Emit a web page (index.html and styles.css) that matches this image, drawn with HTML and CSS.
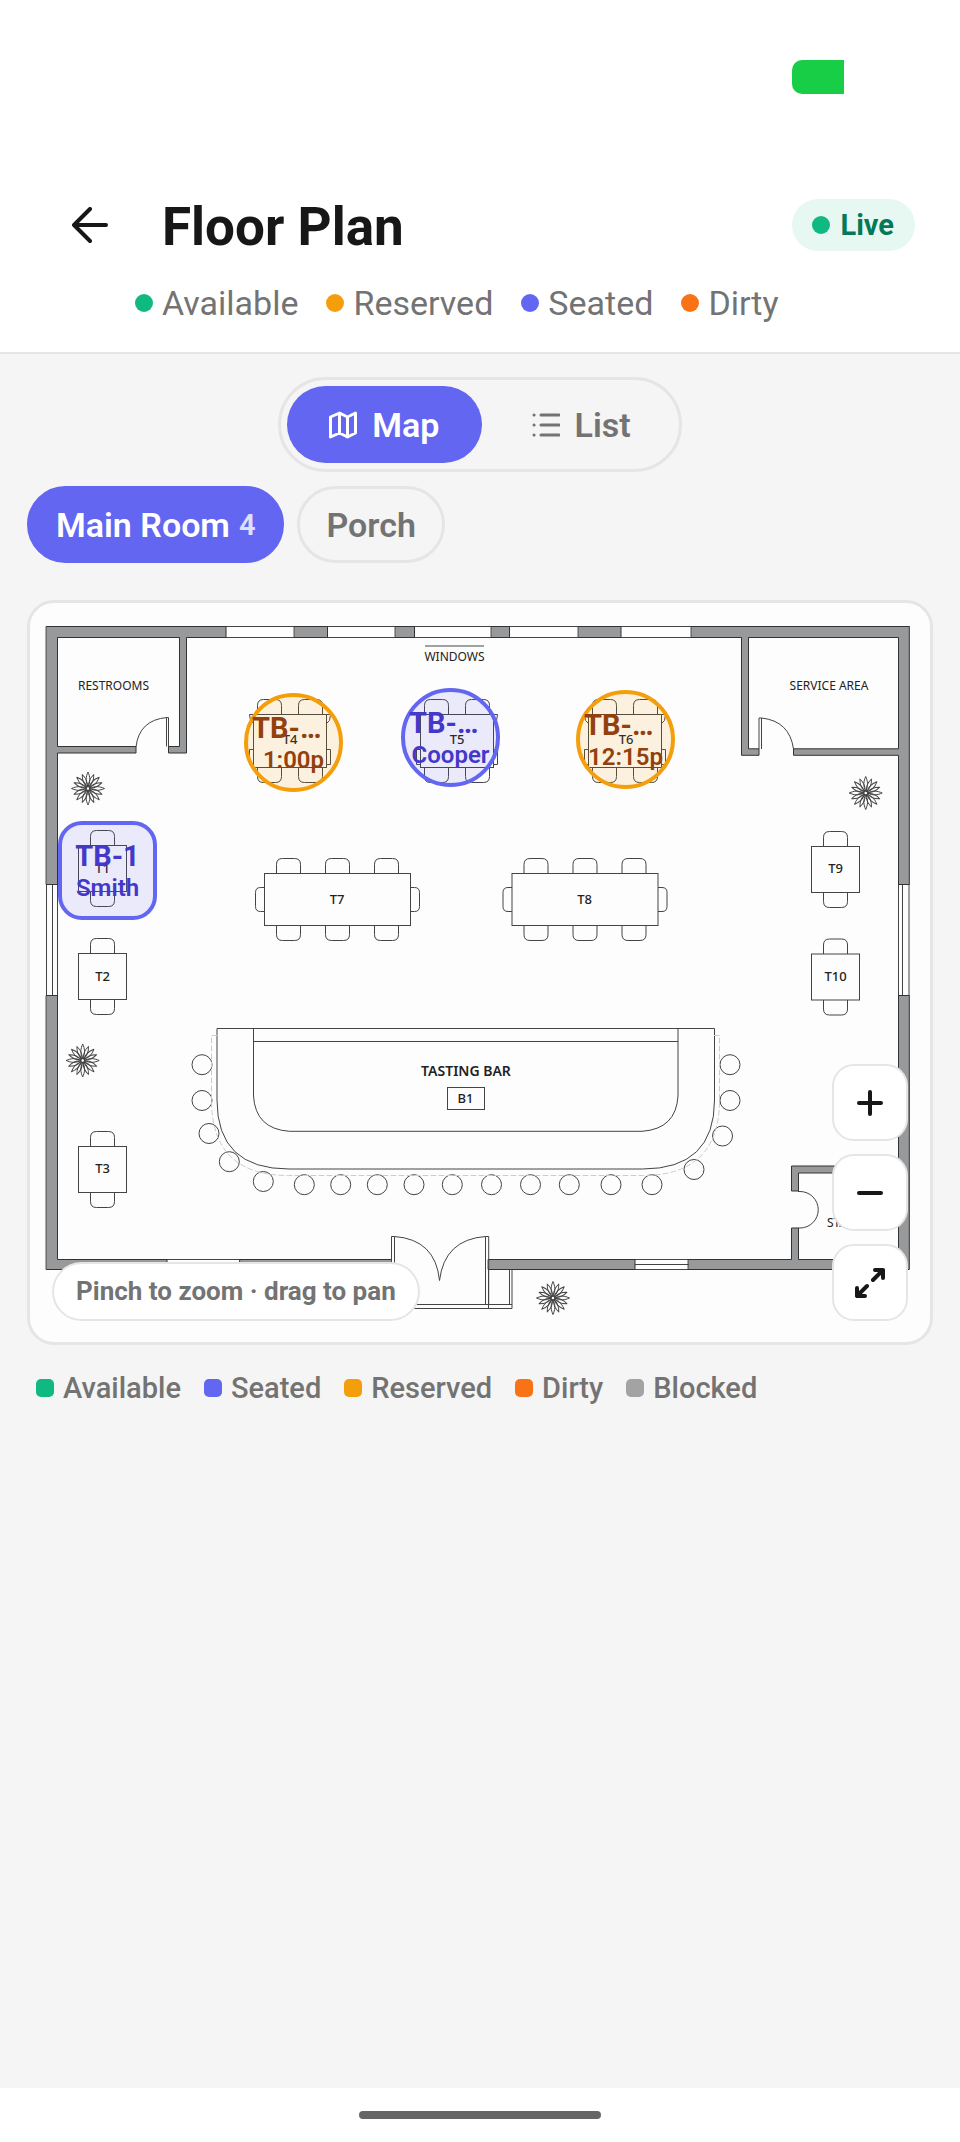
FILE: index.html
```html
<!DOCTYPE html>
<html lang="en">
<head>
  <meta charset="UTF-8">
  <meta name="viewport" content="width=device-width, initial-scale=1.0">
  <title>Floor Plan</title>
  <link rel="stylesheet" href="styles.css">
</head>
<body>
  <div class="status-bar"><span class="status-chip"></span></div>

  <header class="header">
    <div class="header-row">
      <button class="back" type="button" aria-label="Back">
        <svg width="36" height="36" viewBox="0 0 36 36"><path d="M34 18H3M18 2 2 18l16 16"/></svg>
      </button>
      <h1>Floor Plan</h1>
      <span class="live"><i class="dot available"></i>Live</span>
    </div>
    <ul class="summary">
      <li><i class="dot available"></i>Available</li>
      <li><i class="dot reserved"></i>Reserved</li>
      <li><i class="dot seated"></i>Seated</li>
      <li><i class="dot dirty"></i>Dirty</li>
    </ul>
  </header>

  <main class="content">
    <div class="view-toggle">
      <button class="view active" type="button">
        <svg width="28" height="28" viewBox="0 0 28 28"><path d="M1.5 6v20l9-4 8 4 8-4V2l-8 4-8-4zM10.5 2v20M18.5 6v20"/></svg>
        Map
      </button>
      <button class="view" type="button">
        <svg width="28" height="28" viewBox="0 0 28 28"><path d="M9 4h18M9 14h18M9 24h18M2 4h.1M2 14h.1M2 24h.1"/></svg>
        List
      </button>
    </div>

    <nav class="rooms">
      <button class="room active" type="button">Main Room <span class="count">4</span></button>
      <button class="room" type="button">Porch</button>
    </nav>

    <section class="map" id="map">
      <svg class="plan" viewBox="30 603 900 739">
        <defs>
          <g id="petals">
            <path d="M0-2C-3-7-2-12 0-16.5C2-12 3-7 0-2zM0 2C-3 7-2 12 0 16.5C2 12 3 7 0 2z"/>
            <path d="M-2 0C-7-3-12-2-16.5 0C-12 2-7 3-2 0zM2 0C7-3 12-2 16.5 0C12 2 7 3 2 0z"/>
          </g>
          <g id="plant">
            <use href="#petals"/>
            <use href="#petals" transform="rotate(22.5) scale(.92)"/>
            <use href="#petals" transform="rotate(45) scale(.96)"/>
            <use href="#petals" transform="rotate(67.5) scale(.92)"/>
            <circle r="2"/>
          </g>
          <path id="chair-top" d="M0 15V6q0-6 6-6h12q6 0 6 6v9"/>
          <path id="chair-bottom" d="M0 0v9q0 6 6 6h12q6 0 6-6V0"/>
          <path id="chair-left" d="M9 0H5Q0 0 0 5v14q0 5 5 5h4"/>
          <path id="chair-right" d="M0 0h4q5 0 5 5v14q0 5-5 5H0"/>
          <g id="table-small">
            <rect width="48" height="46"/>
            <use href="#chair-top" x="12" y="-15"/>
            <use href="#chair-bottom" x="12" y="46"/>
          </g>
          <g id="table-six">
            <rect width="73" height="53"/>
            <use href="#chair-top" x="4" y="-15"/>
            <use href="#chair-top" x="45" y="-15"/>
            <use href="#chair-bottom" x="4" y="53"/>
            <use href="#chair-bottom" x="45" y="53"/>
            <path d="M0 35h-4v15h4M73 35h4v15h-4M73 0h4l-1 6-3 3M0 0h-4l1 6 3 3"/>
          </g>
          <g id="table-long">
            <rect width="146" height="52"/>
            <use href="#chair-top" x="12" y="-15"/>
            <use href="#chair-top" x="61" y="-15"/>
            <use href="#chair-top" x="110" y="-15"/>
            <use href="#chair-bottom" x="12" y="52"/>
            <use href="#chair-bottom" x="61" y="52"/>
            <use href="#chair-bottom" x="110" y="52"/>
            <use href="#chair-left" x="-9" y="14"/>
            <use href="#chair-right" x="146" y="14"/>
          </g>
        </defs>

        <!-- windows -->
        <g class="line">
          <path d="M46.5 626.5h863M57.5 637.5h841M46.5 884v112M52.5 884v112M57.5 884v112M898.5 884v112M902.5 884v112M909 884v112"/>
          <path d="M167 1259.5h73M167 1269.5h73M635 1259.5h54M635 1264.5h54M635 1269.5h54"/>
        </g>

        <!-- walls -->
        <g class="wall">
          <path d="M46.5 626.5H226v11h-39.5v115.5h-18v-6.5h11v-109H57.5v109H136v6.5H57.5v131.500h-11z"/>
          <path d="M294.5 626.5h33v11h-33zM395.5 626.5h19v11h-19zM491.5 626.5h18v11h-18zM578.5 626.5h42.5v11h-42.5z"/>
          <path d="M691.5 626.5h217.800v258h-10.800V755.3H793.5v-6.5h105v-111.300H748.5v111.300H759v6.5h-17.500v-117.800h-50z"/>
          <path d="M46.5 995.5h11v264H167v10H46.5zM240 1259.5h151.500v10H240z"/>
          <path d="M488.5 1259.5H635v10H488.5zM688.5 1259.5h103V1228h7v31.500h100V1173h-100v18h-7v-25h107V995.5h10.800v274H688.5z"/>
        </g>

        <!-- doors -->
        <g class="line">
          <path d="M136 747q3-27 31-29.500h1.500V747M166.5 718v28.500"/>
          <path d="M793.5 749q-4-28-32-31h-2.500v31M761.5 718v31"/>
          <path d="M798 1191.5h2a18 18 0 0 1 0 36.500h-2"/>
          <path d="M391.5 1308V1236.5h3v68M394.5 1236.5q41 3 45 44q5-41 46-44h3.200v67.500M485.5 1236.5v68M391.5 1304.5H512M391.5 1308.5H512v-39M509.5 1269.5v35M488.5 1269.5v39"/>
        </g>

        <!-- bar -->
        <g class="line">
          <path d="M217 1028.5h497.500V1100q0 69-72 69H289q-72 0-72-69z"/>
          <path d="M253.5 1028.5V1096q2 33 36 35.300H642q34-2.300 36-35.300v-67.500M253.5 1041.5H678"/>
          <circle cx="202" cy="1064.7" r="10"/><circle cx="202" cy="1100.5" r="10"/>
          <circle cx="209" cy="1133.5" r="10"/><circle cx="229.3" cy="1161.7" r="10"/>
          <circle cx="263.3" cy="1181.5" r="10"/><circle cx="304.3" cy="1184.7" r="10"/>
          <circle cx="340.7" cy="1184.7" r="10"/><circle cx="377.3" cy="1184.7" r="10"/>
          <circle cx="414" cy="1184.7" r="10"/><circle cx="452.3" cy="1184.7" r="10"/>
          <circle cx="491.5" cy="1184.7" r="10"/><circle cx="530.5" cy="1184.7" r="10"/>
          <circle cx="569.3" cy="1184.7" r="10"/><circle cx="611" cy="1184.7" r="10"/>
          <circle cx="652" cy="1184.7" r="10"/><circle cx="694" cy="1169.5" r="10"/>
          <circle cx="722.5" cy="1136" r="10"/><circle cx="730" cy="1100.5" r="10"/>
          <circle cx="730" cy="1064.7" r="10"/>
          <rect x="447.5" y="1087.5" width="37" height="22"/>
        </g>
        <path class="footrail" d="M217 1035.5h-5.500V1100q0 75.500 77 75.500h354q77 0 77-75.500v-64.500H714"/>

        <!-- tables -->
        <g class="line">
          <use href="#table-small" x="78.5" y="845.5"/>
          <use href="#table-small" x="78.5" y="953.5"/>
          <use href="#table-small" x="78.5" y="1146.5"/>
          <use href="#table-small" x="811.5" y="846.5"/>
          <use href="#table-small" x="811.5" y="954"/>
          <use href="#table-six" x="253.5" y="714.5"/>
          <use href="#table-six" x="420.5" y="714.5"/>
          <use href="#table-six" x="588.5" y="714.5"/>
          <use href="#table-long" x="264.5" y="873.5"/>
          <use href="#table-long" x="512" y="873.5"/>
          <path d="M425 646h59"/>
        </g>

        <g class="plants">
          <use href="#plant" x="88" y="788.5"/>
          <use href="#plant" x="865.7" y="793"/>
          <use href="#plant" x="82.7" y="1060.5"/>
          <use href="#plant" x="553" y="1298"/>
        </g>

        <g class="labels">
          <text x="113.5" y="690">RESTROOMS</text>
          <text x="829" y="690">SERVICE AREA</text>
          <text x="454.5" y="661">WINDOWS</text>
          <text x="846" y="1227">STAIRS</text>
        </g>
        <g class="labels strong">
          <text x="102.5" y="873">T1</text>
          <text x="102.5" y="981">T2</text>
          <text x="102.5" y="1173">T3</text>
          <text x="290" y="744">T4</text>
          <text x="457" y="744">T5</text>
          <text x="626" y="744">T6</text>
          <text x="337" y="904">T7</text>
          <text x="584.5" y="904">T8</text>
          <text x="835.5" y="873">T9</text>
          <text x="835.5" y="981">T10</text>
          <text x="465.5" y="1103">B1</text>
          <text class="bar-name" x="466" y="1076">TASTING BAR</text>
        </g>
      </svg>

      <button class="marker square seated-table" type="button" style="left: 28px; top: 218px"><b>TB-1</b><span>Smith</span></button>
      <button class="marker reserved-table" type="button" style="left: 214px; top: 90px"><b class="cut">TB-…</b><span>1:00p</span></button>
      <button class="marker seated-table" type="button" style="left: 371px; top: 85px"><b class="cut">TB-…</b><span>Cooper</span></button>
      <button class="marker reserved-table" type="button" style="left: 546px; top: 87px"><b class="cut">TB-…</b><span>12:15p</span></button>

      <p class="hint">Pinch to zoom · drag to pan</p>

      <div class="zoom">
        <button type="button" aria-label="Zoom in">
          <svg width="32" height="32" viewBox="0 0 32 32"><path d="M5 16h22M16 5v22"/></svg>
        </button>
        <button type="button" aria-label="Zoom out">
          <svg width="32" height="32" viewBox="0 0 32 32"><path d="M5 16h22"/></svg>
        </button>
        <button type="button" aria-label="Fit to screen">
          <svg width="32" height="32" viewBox="0 0 32 32"><path d="M21 3h8v8M29 3 19 13M11 29H3v-8M3 29l10-10"/></svg>
        </button>
      </div>
    </section>

    <ul class="legend">
      <li><i class="swatch available"></i>Available</li>
      <li><i class="swatch seated"></i>Seated</li>
      <li><i class="swatch reserved"></i>Reserved</li>
      <li><i class="swatch dirty"></i>Dirty</li>
      <li><i class="swatch blocked"></i>Blocked</li>
    </ul>
  </main>

  <footer class="home-bar"><span></span></footer>
</body>
</html>
```

FILE: styles.css
```css
* {
  box-sizing: border-box;
}

body {
  margin: 0;
  min-height: 100vh;
  display: flex;
  flex-direction: column;
  background: #f5f5f5;
  color: #171717;
  font-family: Roboto, "Liberation Sans", sans-serif;
}

h1,
p,
ul {
  margin: 0;
  padding: 0;
}

ul {
  list-style: none;
}

button {
  font: inherit;
  padding: 0;
  border: 0;
  background: none;
  cursor: pointer;
}

svg {
  display: block;
  fill: none;
  stroke: currentColor;
  stroke-linecap: round;
  stroke-linejoin: round;
}

/* status bar */
.status-bar {
  display: flex;
  justify-content: flex-end;
  padding: 60px 116px 0 0;
  height: 184px;
  background: #fff;
}

.status-chip {
  width: 52px;
  height: 34px;
  border-radius: 10px 0 0 10px;
  background: #19ce47;
}

/* header */
.header {
  padding-bottom: 28px;
  background: #fff;
  border-bottom: 2px solid #e5e5e5;
}

.header-row {
  display: flex;
  align-items: center;
  height: 82px;
  padding: 0 45px 0 72px;
}

.back {
  margin-right: 54px;
  color: #171717;
}

.back svg {
  stroke-width: 4;
}

h1 {
  flex: 1;
  padding-top: 4px;
  font-size: 53px;
  line-height: 64px;
  font-weight: 700;
}

.live {
  display: flex;
  align-items: center;
  gap: 10px;
  height: 52px;
  padding: 0 21px 0 20px;
  border-radius: 26px;
  background: #e7f8f2;
  color: #047857;
  font-size: 29px;
  font-weight: 700;
}

.dot,
.swatch {
  width: 18px;
  height: 18px;
  border-radius: 50%;
}

.swatch {
  border-radius: 5px;
}

.available { background: #10b981; }
.reserved { background: #f59e0b; }
.seated { background: #6366f1; }
.dirty { background: #f97316; }
.blocked { background: #a3a3a3; }

.summary {
  display: flex;
  gap: 28px;
  padding: 16px 0 0 135px;
  color: #737373;
  font-size: 34px;
  line-height: 42px;
}

.summary li,
.legend li {
  display: flex;
  align-items: center;
  gap: 9px;
}

/* content */
.content {
  flex: 1;
  padding: 23px 27px;
}

.view-toggle {
  display: flex;
  gap: 8px;
  width: fit-content;
  margin: 0 auto 14px;
  padding: 6px;
  border: 3px solid #e5e5e5;
  border-radius: 48px;
}

.view,
.room {
  display: flex;
  align-items: center;
  height: 77px;
  border-radius: 39px;
  color: #737373;
  font-size: 34px;
  font-weight: 600;
}

.view {
  gap: 15px;
  padding: 0 42px;
}

.view svg {
  stroke-width: 3;
}

.rooms {
  display: flex;
  gap: 13px;
  margin-bottom: 37px;
}

.room {
  gap: 9px;
  padding: 0 26px;
  border: 3px solid #e5e5e5;
}

.view.active,
.room.active {
  border-color: #6366f1;
  background: #6366f1;
  color: #fff;
}

.count {
  font-size: 29px;
  opacity: 0.8;
}

/* map */
.map {
  position: relative;
  border: 3px solid #e5e5e5;
  border-radius: 27px;
  background: #fdfdfd;
  overflow: hidden;
}

.plan {
  width: 100%;
  height: auto;
}

.line {
  stroke: #444;
  stroke-width: 1;
  stroke-linecap: butt;
  stroke-linejoin: miter;
}

.wall {
  fill: #98999b;
  stroke: #333;
  stroke-width: 1;
  stroke-linejoin: miter;
}

.footrail {
  stroke: #ccc;
  stroke-width: 1;
  stroke-dasharray: 5 3;
}

.plants {
  stroke: #444;
  stroke-width: 1;
}

.labels {
  fill: #222;
  stroke: none;
  font-family: "Noto Sans", "Open Sans", sans-serif;
  font-size: 12px;
  text-anchor: middle;
}

.strong {
  font-size: 13px;
  font-weight: 500;
}

.bar-name {
  font-size: 14px;
  font-weight: 600;
}

.marker {
  position: absolute;
  display: flex;
  flex-direction: column;
  align-items: center;
  justify-content: center;
  width: 99px;
  height: 99px;
  padding: 0 4px;
  border: 4px solid;
  border-radius: 50%;
}

.marker.square {
  border-radius: 24px;
}

.marker b {
  font-size: 29px;
  line-height: 34px;
  font-weight: 700;
}

.marker .cut {
  align-self: flex-start;
}

.marker span {
  font-size: 24px;
  line-height: 30px;
  font-weight: 600;
}

.seated-table {
  border-color: #6366f1;
  background: rgba(99, 102, 241, 0.12);
  color: #4338ca;
}

.reserved-table {
  border-color: #f59e0b;
  background: rgba(245, 158, 11, 0.12);
  color: #92400e;
}

.hint {
  position: absolute;
  left: 22px;
  bottom: 21px;
  padding: 0 22px;
  border: 2px solid #e5e5e5;
  border-radius: 30px;
  background: #fff;
  color: #737373;
  font-size: 26px;
  line-height: 55px;
  font-weight: 700;
}

.zoom {
  position: absolute;
  right: 22px;
  bottom: 21px;
  display: grid;
  gap: 13px;
}

.zoom button {
  display: grid;
  place-items: center;
  width: 76px;
  height: 77px;
  border: 2px solid #e5e5e5;
  border-radius: 22px;
  background: #fff;
  color: #171717;
}

.zoom svg {
  stroke-width: 4;
}

.legend {
  display: flex;
  flex-wrap: wrap;
  gap: 10px 23px;
  padding: 25px 9px;
  color: #737373;
  font-size: 29px;
  line-height: 36px;
  font-weight: 500;
}

/* home indicator */
.home-bar {
  display: flex;
  justify-content: center;
  height: 54px;
  padding-top: 23px;
  background: #fff;
}

.home-bar span {
  width: 242px;
  height: 8px;
  border-radius: 4px;
  background: #666;
}
```
